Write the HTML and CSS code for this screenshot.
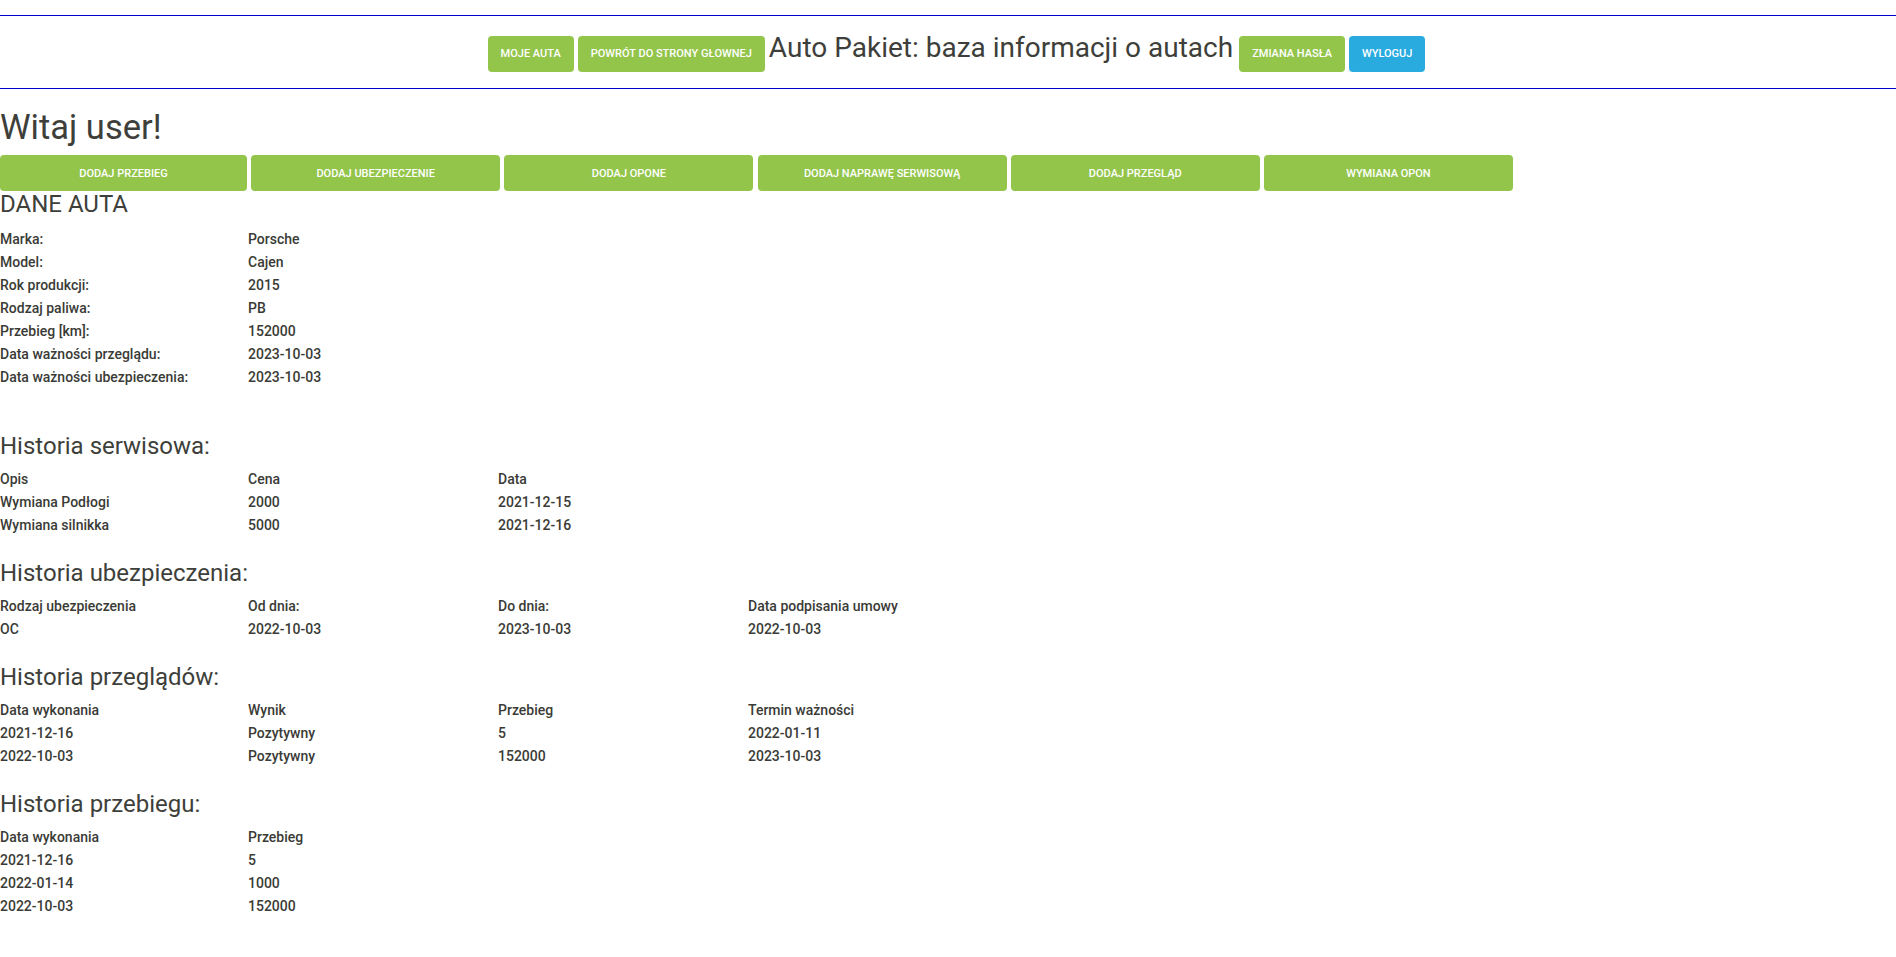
FILE: index.html
```html
<!DOCTYPE html>
<html lang="pl">
<head>
<meta charset="utf-8">
<title>Auto Pakiet</title>
<link rel="stylesheet" href="styles.css">
</head>
<body>
<header class="topbar">
  <a class="btn btn-success" href="#">Moje auta</a>
  <a class="btn btn-success" href="#">Powrót do strony głownej</a>
  <h2 class="brand">Auto Pakiet: baza informacji o autach</h2>
  <a class="btn btn-success" href="#">Zmiana hasła</a>
  <a class="btn btn-info" href="#">Wyloguj</a>
</header>

<h1 class="welcome">Witaj user!</h1>

<nav class="actions">
  <a class="btn btn-success btn-block" href="#">Dodaj przebieg</a>
  <a class="btn btn-success btn-block" href="#">Dodaj ubezpieczenie</a>
  <a class="btn btn-success btn-block" href="#">Dodaj opone</a>
  <a class="btn btn-success btn-block" href="#">Dodaj naprawę serwisową</a>
  <a class="btn btn-success btn-block" href="#">Dodaj przegląd</a>
  <a class="btn btn-success btn-block" href="#">Wymiana opon</a>
</nav>

<section class="section section-first">
  <h3 class="section-title">DANE AUTA</h3>
  <div class="grid grid-2">
    <div>Marka:</div><div>Porsche</div>
    <div>Model:</div><div>Cajen</div>
    <div>Rok produkcji:</div><div>2015</div>
    <div>Rodzaj paliwa:</div><div>PB</div>
    <div>Przebieg [km]:</div><div>152000</div>
    <div>Data ważności przeglądu:</div><div>2023-10-03</div>
    <div>Data ważności ubezpieczenia:</div><div>2023-10-03</div>
  </div>
</section>

<section class="section">
  <h3 class="section-title">Historia serwisowa:</h3>
  <div class="grid grid-3">
    <div>Opis</div><div>Cena</div><div>Data</div>
    <div>Wymiana Podłogi</div><div>2000</div><div>2021-12-15</div>
    <div>Wymiana silnikka</div><div>5000</div><div>2021-12-16</div>
  </div>
</section>

<section class="section">
  <h3 class="section-title">Historia ubezpieczenia:</h3>
  <div class="grid grid-4">
    <div>Rodzaj ubezpieczenia</div><div>Od dnia:</div><div>Do dnia:</div><div>Data podpisania umowy</div>
    <div>OC</div><div>2022-10-03</div><div>2023-10-03</div><div>2022-10-03</div>
  </div>
</section>

<section class="section">
  <h3 class="section-title">Historia przeglądów:</h3>
  <div class="grid grid-4">
    <div>Data wykonania</div><div>Wynik</div><div>Przebieg</div><div>Termin ważności</div>
    <div>2021-12-16</div><div>Pozytywny</div><div>5</div><div>2022-01-11</div>
    <div>2022-10-03</div><div>Pozytywny</div><div>152000</div><div>2023-10-03</div>
  </div>
</section>

<section class="section">
  <h3 class="section-title">Historia przebiegu:</h3>
  <div class="grid grid-2">
    <div>Data wykonania</div><div>Przebieg</div>
    <div>2021-12-16</div><div>5</div>
    <div>2022-01-14</div><div>1000</div>
    <div>2022-10-03</div><div>152000</div>
  </div>
</section>
</body>
</html>
```

FILE: styles.css
```css
html, body {
  margin: 0;
  padding: 0;
  background: #ffffff;
}

body {
  font-family: Roboto, "Liberation Sans", sans-serif;
  color: #3e3f3a;
  font-size: 14px;
}

.topbar {
  margin-top: 15px;
  border-top: 1px solid #0000cc;
  border-bottom: 1px solid #0000cc;
  box-sizing: border-box;
  height: 74px;
  display: flex;
  justify-content: center;
  align-items: baseline;
  gap: 4px;
  padding: 17px 0 0 17px;
}

.brand {
  margin: 0 2px 0 0;
  font-size: 28px;
  font-weight: 400;
  line-height: 1.1;
  color: #3e3f3a;
  white-space: nowrap;
}

.btn {
  display: inline-flex;
  align-items: center;
  justify-content: center;
  box-sizing: border-box;
  height: 36px;
  padding: 0 13px;
  border-radius: 4px;
  font-size: 11px;
  font-weight: 500;
  text-transform: uppercase;
  text-decoration: none;
  color: #ffffff;
  white-space: nowrap;
}

.btn-success {
  background: #93c54b;
}

.btn-info {
  background: #29abe0;
}

.welcome {
  margin: 18.5px 0 9.5px 0;
  font-size: 34.5px;
  font-weight: 400;
  line-height: 38px;
}

.actions {
  display: grid;
  grid-template-columns: 247px repeat(5, 249px);
  column-gap: 4.2px;
}

.btn-block {
  width: 100%;
}

.section-title {
  margin: 23px 0 8.5px 0;
  font-size: 24px;
  font-weight: 400;
  line-height: 26.4px;
}

.section-first .section-title {
  margin-top: 0;
  margin-bottom: 11px;
}

.section-first {
  padding-bottom: 21px;
}

.grid {
  display: grid;
  font-size: 14px;
  font-weight: 500;
  line-height: 23px;
  color: #3a3b36;
}

.grid-2 {
  grid-template-columns: 248px 250px;
}

.grid-3 {
  grid-template-columns: 248px 250px 250px;
}

.grid-4 {
  grid-template-columns: 248px 250px 250px 250px;
}
```
